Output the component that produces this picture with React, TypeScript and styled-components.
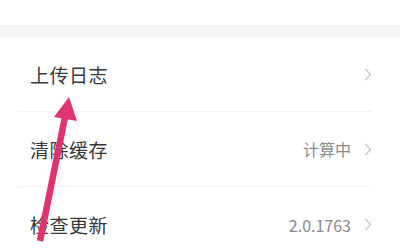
import React from 'react'
import styled, { createGlobalStyle } from 'styled-components'

const GlobalStyle = createGlobalStyle`
  html, body {
    margin: 0;
    padding: 0;
    background: #ffffff;
  }
  body {
    font-family: "Noto Sans CJK SC", "Noto Sans", sans-serif;
    overflow: hidden;
  }
`

const Page = styled.div`
  position: relative;
  width: 400px;
  height: 251px;
  overflow: hidden;
  background: #ffffff;
`

const TopArea = styled.div`
  height: 25px;
  background: #ffffff;
`

const Band = styled.div`
  height: 12px;
  background: #f5f5f5;
`

const List = styled.div`
  margin: 0 28px 0 17px;
  display: flex;
  flex-direction: column;
`

const Row = styled.div<{ $last?: boolean }>`
  height: 75px;
  display: flex;
  align-items: center;
  padding-left: 13px;
  border-bottom: ${(p) => (p.$last ? 'none' : '1px solid #f2f2f2')};
  box-sizing: border-box;
`

const Label = styled.span`
  flex: 1;
  font-size: 19px;
  color: #383838;
  letter-spacing: 0.5px;
`

const Value = styled.span`
  font-size: 16px;
  color: #8a8a8a;
  margin-right: 13px;
`

const Chevron = () => (
  <svg width="8" height="13" viewBox="0 0 8 13">
    <path d="M1.5 1 L6.5 6.5 L1.5 12" fill="none" stroke="#c8c8c8" strokeWidth="1.4" />
  </svg>
)

const Overlay = styled.svg`
  position: absolute;
  left: 0;
  top: 0;
  pointer-events: none;
`

const rows = [
  { label: '上传日志' },
  { label: '清除缓存', value: '计算中' },
  { label: '检查更新', value: '2.0.1763' },
]

export default function App() {
  return (
    <Page>
      <GlobalStyle />
      <TopArea />
      <Band />
      <List>
        {rows.map((r, i) => (
          <Row key={r.label} $last={i === rows.length - 1}>
            <Label>{r.label}</Label>
            {r.value && <Value>{r.value}</Value>}
            <Chevron />
          </Row>
        ))}
      </List>
      <Overlay width="400" height="251" viewBox="0 0 400 251">
        <line x1="40" y1="241" x2="66" y2="112" stroke="#df3472" strokeWidth="6.5" />
        <polygon points="69,97 54,117 77,121" fill="#df3472" />
      </Overlay>
    </Page>
  )
}
